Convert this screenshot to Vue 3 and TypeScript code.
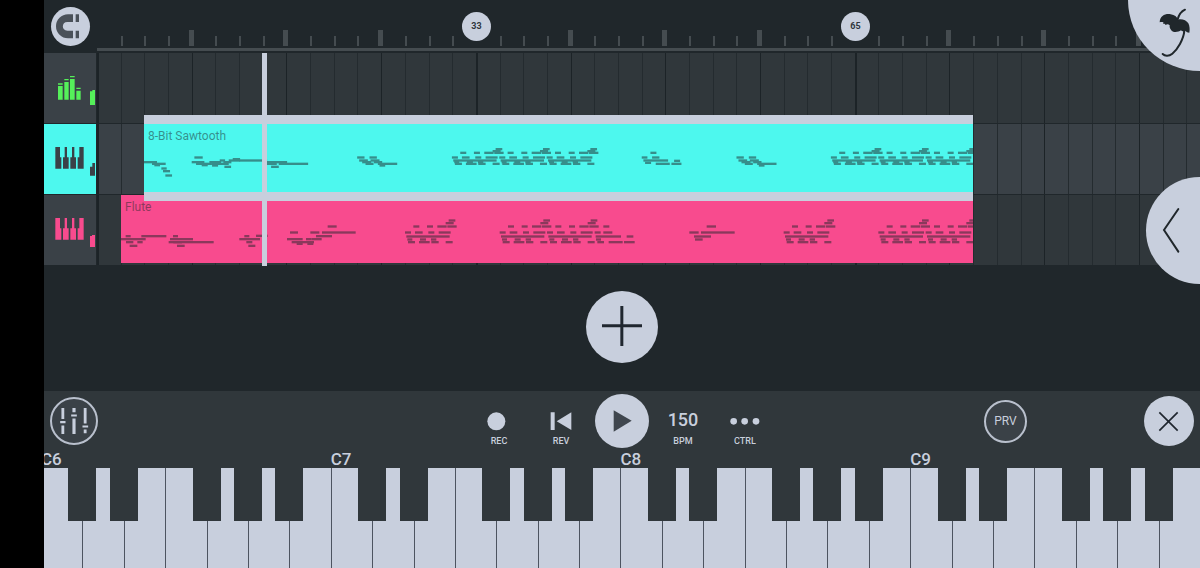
<script setup lang="ts">
import { computed, ref } from 'vue'

type Note = [x: number, row: number, w: number]

interface Clip {
  name: string
  start: number
  length: number
  notes: Note[]
}

interface Track {
  id: string
  label: string
  tone: string
  icon: 'levels' | 'keys'
  clip?: Clip
}

const STEP = 23.68
const UNITS = 71

const x = (step: number): number => Math.round(step * STEP)

/* Note columns are in 1/71 of a step, rows in thirds of a pixel from the top of the clip. */
const riff: [number, number, number][] = [
  [25, 0, 18], [66, 0, 18], [97, 0, 28], [127, 0, 28],
  [122, 1, 24], [131, 2, 20],
  [0, 3, 18], [30, 3, 23], [70, 3, 18], [101, 3, 36],
  [4, 4, 130],
  [7, 5, 15], [45, 5, 18], [78, 5, 16],
  [9, 6, 21], [42, 6, 32], [79, 6, 22], [122, 6, 21],
]

const riffs = (steps: number[], rows: number[]): Note[] =>
  steps.flatMap((s) => riff.map(([nx, r, w]): Note => [s * UNITS + nx, rows[r], w]))

const shift = (notes: Note[], by: number): Note[] => notes.map(([nx, r, w]): Note => [nx + by, r, w])

const fall: Note[] = [
  [0, 100, 22], [37, 100, 22], [6, 109, 26], [15, 114, 27], [25, 119, 24],
  [40, 109, 27], [50, 114, 25], [62, 119, 58], [67, 124, 17],
]

const sawNotes: Note[] = [
  [0, 114, 39], [24, 119, 41], [31, 123, 17], [52, 133, 16], [57, 141, 21], [64, 154, 20],
  [151, 100, 25], [143, 114, 38], [156, 119, 45], [173, 123, 18], [196, 114, 35], [201, 119, 53],
  [204, 124, 18], [227, 109, 16], [238, 114, 24], [241, 128, 20], [254, 109, 34], [266, 105, 22],
  [286, 109, 83], [365, 114, 64], [365, 119, 33], [404, 119, 88], [381, 128, 23],
  ...shift(fall, 639),
  ...riffs([13, 15, 17], [86, 81, 75, 100, 109, 114, 119]),
  [1492, 100, 17], [1523, 100, 22], [1518, 86, 18], [1497, 109, 74], [1502, 116, 18],
  [1534, 119, 42], [1581, 119, 30], [1589, 110, 18],
  ...shift(fall, 1776),
  ...riffs([29, 31, 33], [86, 81, 75, 100, 109, 114, 119]),
]

const fluteNotes: Note[] = [
  [14, 123, 15], [0, 132, 74], [15, 141, 22], [49, 141, 16], [26, 152, 23], [61, 123, 75],
  [156, 123, 15], [147, 132, 69], [143, 141, 40], [157, 141, 121], [168, 152, 23],
  [355, 132, 62], [370, 123, 15], [376, 141, 18], [382, 152, 21], [405, 122, 35],
  [507, 112, 24], [498, 132, 47], [512, 141, 67], [527, 146, 18], [555, 132, 17], [559, 146, 18],
  [568, 112, 27], [572, 132, 30], [585, 123, 48], [603, 112, 101], [620, 94, 27],
  ...riffs([12, 16, 18], [94, 84, 76, 112, 124, 133, 141]),
  [1421, 112, 18], [1447, 112, 27], [1447, 94, 18], [1424, 124, 76], [1517, 124, 20],
  [1425, 133, 15], [1429, 141, 20], [1463, 141, 42], [1509, 141, 32],
  [1757, 94, 28], [1705, 112, 28], [1740, 112, 101], [1719, 124, 51], [1722, 133, 23],
  ...riffs([28, 32, 34], [94, 84, 76, 112, 124, 133, 141]),
]

const tracks: Track[] = [
  { id: 'master', label: 'Master', tone: 'green', icon: 'levels' },
  {
    id: 'sawtooth', label: '8-Bit Sawtooth', tone: 'cyan', icon: 'keys',
    clip: { name: '8-Bit Sawtooth', start: 2, length: 35, notes: sawNotes },
  },
  {
    id: 'flute', label: 'Flute', tone: 'pink', icon: 'keys',
    clip: { name: 'Flute', start: 1, length: 36, notes: fluteNotes },
  },
]

const selected = ref('sawtooth')
const playing = ref(false)
const playhead = 7

const steps = Array.from({ length: 160 }, (_, i) => i)
const ticks = steps.filter((s) => s % 16 !== 0)
const markers = [
  { step: 16, bar: 33 },
  { step: 32, bar: 65 },
]

const lineWidth = (s: number): number => (s % 16 === 0 ? 2 : 1)
const lineClass = (s: number): string => (s % 4 === 0 ? 'line strong' : 'line')

const names = ['C', 'D', 'E', 'F', 'G', 'A', 'B']
const keys = computed(() =>
  [6, 7, 8, 9].flatMap((octave) =>
    names.map((n) => ({
      id: `${n}${octave}`,
      label: n === 'C' ? `C${octave}` : '',
      sharp: n !== 'E' && n !== 'B' ? `${n}♯${octave}` : '',
    })),
  ),
)
</script>

<template>
  <div class="app">
    <main class="studio">
      <section class="timeline">
        <div class="ruler-row">
          <div class="corner">
            <button class="round magnet" type="button" aria-label="Snap to grid">
              <svg viewBox="33 20 117 117" aria-hidden="true">
                <path d="M99 42H84a36 36 0 0 0 0 72h15V91H82c-18 0-18-26 0-26h17z" />
                <path d="M107 42h10v23h-10zM107 91h10v23h-10z" />
              </svg>
            </button>
          </div>
          <div class="ruler">
            <svg class="ticks" aria-hidden="true">
              <rect
                v-for="s in ticks" :key="s" class="tick"
                :x="x(s) - (s % 4 === 0 ? 3 : 0)" :y="s % 4 === 0 ? 30 : 36"
                :width="s % 4 === 0 ? 5 : 2" :height="s % 4 === 0 ? 16 : 10"
              />
            </svg>
            <button
              v-for="m in markers" :key="m.bar" class="marker" type="button"
              :style="{ left: x(m.step) + 'px' }"
            >{{ m.bar }}</button>
          </div>
        </div>

        <div class="lanes">
          <div
            v-for="t in tracks" :key="t.id"
            :class="['lane', t.tone, { selected: selected === t.id }]"
          >
            <button class="head" type="button" :aria-label="t.label" @click="selected = t.id">
              <svg viewBox="0 0 156 213" aria-hidden="true">
                <template v-if="t.icon === 'levels'">
                  <path d="M42 99h14v41H42zM61 87h13v53H61zM78 78h14v62H78zM97 113h13v27H97z" />
                  <path d="M42 91h14v4H42zM61 78h13v4H61zM78 69h14v4H78zM97 104h13v4H97z" />
                  <path d="M138 115h7v-4h8v45h-15z" />
                </template>
                <template v-else>
                  <path d="M34 69h14v31h4v34H34zM62 69h7v31h5v34H57v-34h5zM84 69h7v31h5v34H79v-34h5zM106 69h13v65h-18v-34h5z" />
                  <path v-if="t.tone === 'cyan'" d="M138 128h7v-11h8v38h-15z" />
                  <path v-else d="M138 123h6v-3h9v36h-15z" />
                </template>
              </svg>
            </button>
            <div class="track">
              <svg class="grid" aria-hidden="true">
                <rect
                  v-for="s in steps" :key="s" :class="lineClass(s)"
                  :x="x(s)" y="0" :width="lineWidth(s)" height="100%"
                />
              </svg>
              <div
                v-if="t.clip" class="clip"
                :style="{ left: x(t.clip.start) + 'px', width: x(t.clip.length) + 'px' }"
              >
                <span class="clip-name">{{ t.clip.name }}</span>
                <svg
                  class="notes" :viewBox="`0 0 ${t.clip.length * UNITS} 204`"
                  preserveAspectRatio="none" aria-hidden="true"
                >
                  <rect
                    v-for="(n, i) in t.clip.notes" :key="i"
                    :x="n[0]" :y="n[1] - 3" :width="n[2]" height="7"
                  />
                </svg>
              </div>
            </div>
          </div>
          <div class="cursor-layer">
            <div class="playhead" :style="{ left: x(playhead) - 1 + 'px' }"></div>
          </div>
        </div>
      </section>

      <section class="empty">
        <button class="round add" type="button" aria-label="Add track">
          <svg viewBox="0 0 216 216" aria-hidden="true">
            <path d="M48 100h120v9H48zM103 45h9v120h-9z" />
          </svg>
        </button>
      </section>

      <section class="panel">
        <div class="toolbar">
          <div class="tools-left">
            <button class="ring mixer" type="button" aria-label="Mixer">
              <svg viewBox="35 39 140 140" aria-hidden="true">
                <path d="M65 68h9v35h-9zM65 123h9v27h-9zM61 109h17v7H61zM100 68h10v13h-10zM100 101h10v49h-10zM96 88h18v7H96zM136 68h9v49h-9zM136 136h9v12h-9zM132 123h18v7h-18z" />
              </svg>
            </button>
          </div>

          <div class="transport">
            <button class="item" type="button">
              <svg viewBox="0 0 96 72" aria-hidden="true"><circle cx="40" cy="37" r="27" /></svg>
              <span class="caption">REC</span>
            </button>
            <button class="item" type="button">
              <svg viewBox="0 0 96 72" aria-hidden="true"><path d="M17 10h12v53H17zM79 10v53L35 37z" /></svg>
              <span class="caption">REV</span>
            </button>
            <button
              class="round play" type="button" aria-label="Play"
              :aria-pressed="playing" @click="playing = !playing"
            >
              <svg viewBox="0 0 162 162" aria-hidden="true"><path d="M56 49l54 31-54 33z" /></svg>
            </button>
            <button class="item" type="button">
              <span class="tempo">150</span>
              <span class="caption">BPM</span>
            </button>
            <button class="item" type="button">
              <svg viewBox="0 0 96 72" aria-hidden="true">
                <circle cx="14" cy="37" r="10" /><circle cx="47" cy="37" r="10" /><circle cx="81" cy="37" r="10" />
              </svg>
              <span class="caption">CTRL</span>
            </button>
          </div>

          <div class="tools-right">
            <button class="ring preview" type="button">PRV</button>
            <button class="round close" type="button" aria-label="Close keyboard">
              <svg viewBox="0 0 150 150" aria-hidden="true"><path d="M46 49l55 55M101 49l-55 55" /></svg>
            </button>
          </div>
        </div>

        <div class="keyboard">
          <div v-for="k in keys" :key="k.id" class="key">
            <span class="key-label">{{ k.label }}</span>
            <button class="white" type="button" :aria-label="k.id"></button>
            <button v-if="k.sharp" class="black" type="button" :aria-label="k.sharp"></button>
          </div>
        </div>
      </section>

      <button class="logo" type="button" aria-label="Main menu">
        <svg viewBox="684 0 216 213" aria-hidden="true">
          <path d="M779 67C780 47 797 40 812 43C824 45 831 50 833 59C843 55 860 60 865 70C869 78 870 88 868 98C863 98 859 95 856 92C851 97 846 94 843 91C835 97 820 98 815 92C810 86 808 82 809 76C805 72 801 72 797 75L794 71L790 72L790 67C786 66 783 66 779 67Z" />
          <path class="stroke" d="M833 58C837 43 846 33 855 29" />
          <path class="stroke" d="M853 92C851 118 832 149 817 161C806 170 794 168 788 162" />
        </svg>
      </button>
      <button class="drawer" type="button" aria-label="Open side panel">
        <svg viewBox="738 201 162 321" aria-hidden="true"><path d="M835 297L792 360L835 425" /></svg>
      </button>
    </main>
  </div>
</template>

<style>
body {
  margin: 0;
  background: #000;
}
</style>

<style scoped>
.app {
  --light: #c8cfdd;
  --dark: #20272b;
  --surface: #30373b;
  --raised: #3a4147;
  box-sizing: border-box;
  min-height: 100vh;
  padding-left: 44px;
  display: flex;
  background: #000;
  color: var(--light);
  font-family: Roboto, "Liberation Sans", sans-serif;
}

button {
  margin: 0;
  padding: 0;
  border: 0;
  background: none;
  color: inherit;
  font: inherit;
  cursor: pointer;
}

svg {
  display: block;
}

.studio {
  position: relative;
  flex: 1;
  min-width: 0;
  display: flex;
  flex-direction: column;
  overflow: hidden;
  background: var(--dark);
}

.round {
  flex: none;
  border-radius: 50%;
  background: var(--light);
}

.round svg {
  width: 100%;
  height: 100%;
}

.ring {
  flex: none;
  box-sizing: border-box;
  border: 2px solid #b9c0cd;
  border-radius: 50%;
  background: var(--raised);
}

.ruler-row {
  display: flex;
  height: 53px;
}

.corner {
  flex: none;
  width: 53px;
  display: flex;
  align-items: center;
  justify-content: center;
}

.magnet {
  width: 39px;
  height: 39px;
}

.magnet path {
  fill: #4a5159;
}

.ruler {
  position: relative;
  flex: 1;
  box-sizing: border-box;
  height: 51px;
  border-bottom: 3px solid #454c50;
  overflow: hidden;
}

.ticks {
  width: 100%;
  height: 48px;
}

.tick {
  fill: #454c50;
}

.marker {
  position: absolute;
  top: 12px;
  width: 29px;
  height: 29px;
  margin-left: -14px;
  border-radius: 50%;
  background: var(--light);
  color: #30373d;
  font-size: 9px;
  font-weight: 700;
  line-height: 29px;
}

.lanes {
  position: relative;
}

.lane {
  position: relative;
  display: flex;
  height: 71px;
  color: #55f05a;
}

.lane.cyan {
  color: #4df8ee;
}

.lane.pink {
  color: #f84b8e;
}

.lane.selected {
  z-index: 1;
}

.head {
  flex: none;
  width: 52px;
  height: 70px;
  margin-right: 1px;
  background: var(--raised);
}

.head svg {
  width: 52px;
  height: 71px;
  fill: currentColor;
}

.selected .head {
  background: currentColor;
}

.selected .head svg {
  fill: #3a4147;
}

.track {
  position: relative;
  flex: 1;
  min-width: 0;
  height: 70px;
  background: var(--surface);
}

.selected .track {
  background: var(--raised);
}

.grid {
  width: 100%;
  height: 70px;
}

.line {
  fill: #242b2f;
}

.line.strong {
  fill: #1c2327;
}

.clip {
  position: absolute;
  top: 0;
  height: 68px;
  background: currentColor;
}

.selected .clip {
  top: -9px;
  border-top: 9px solid var(--light);
  border-bottom: 9px solid var(--light);
}

.clip-name {
  position: absolute;
  top: 4px;
  left: 4px;
  color: rgba(32, 39, 43, 0.5);
  font-size: 12px;
  line-height: 16px;
  white-space: nowrap;
}

.notes {
  width: 100%;
  height: 68px;
  overflow: hidden;
  fill: #20272b;
  opacity: 0.5;
}

.cursor-layer {
  position: absolute;
  z-index: 2;
  top: 0;
  bottom: 0;
  left: 53px;
  right: 0;
  pointer-events: none;
}

.playhead {
  position: absolute;
  top: 0;
  bottom: 0;
  width: 5px;
  background: var(--light);
}

.empty {
  flex: 1;
  min-height: 96px;
  padding-bottom: 3px;
  display: flex;
  align-items: center;
  justify-content: center;
}

.add {
  width: 72px;
  height: 72px;
}

.add path {
  fill: #20272f;
}

.panel {
  background: var(--surface);
}

.toolbar {
  display: grid;
  grid-template-columns: 1fr auto 1fr;
  height: 60px;
}

.tools-left,
.tools-right {
  display: flex;
  align-items: center;
  padding: 0 6px;
}

.tools-right {
  justify-content: flex-end;
  gap: 117px;
}

.mixer {
  width: 48px;
  height: 48px;
}

.mixer svg {
  width: 44px;
  height: 44px;
  fill: var(--light);
}

.transport {
  display: grid;
  grid-template-columns: 62px 62px 60px 62px 62px;
  justify-items: center;
  align-items: center;
}

.item {
  display: flex;
  flex-direction: column;
  align-items: center;
  box-sizing: border-box;
  width: 62px;
  height: 60px;
  padding-top: 18px;
}

.item svg {
  width: 32px;
  height: 24px;
  fill: var(--light);
}

.caption {
  margin-top: 2px;
  font-size: 9px;
  font-weight: 500;
  line-height: 12px;
}

.tempo {
  height: 24px;
  font-size: 18px;
  font-weight: 500;
  line-height: 22px;
}

.play {
  width: 54px;
  height: 54px;
}

.play path {
  fill: #3f464e;
}

.preview {
  width: 43px;
  height: 43px;
  font-size: 12px;
}

.close {
  width: 50px;
  height: 50px;
}

.close path {
  fill: none;
  stroke: #20272f;
  stroke-width: 5;
}

.keyboard {
  display: flex;
  margin-left: -3px;
}

.key {
  position: relative;
  flex: 1;
  min-width: 0;
}

.key-label {
  display: block;
  height: 17px;
  font-size: 17px;
  font-weight: 500;
  line-height: 17px;
}

.white {
  display: block;
  box-sizing: border-box;
  width: 100%;
  height: 100px;
  border-left: 1px solid #4d5460;
  background: var(--light);
}

.black {
  position: absolute;
  z-index: 1;
  top: 17px;
  right: -14px;
  width: 28px;
  height: 53px;
  background: var(--surface);
}

.logo {
  position: absolute;
  z-index: 3;
  top: 0;
  right: 0;
  width: 72px;
  height: 71px;
  border-bottom-left-radius: 100%;
  background: var(--light);
}

.logo svg {
  width: 72px;
  height: 71px;
  fill: #20272b;
}

.logo .stroke {
  fill: none;
  stroke: #20272b;
  stroke-width: 6;
  stroke-linecap: round;
}

.drawer {
  position: absolute;
  z-index: 3;
  top: 177px;
  right: 0;
  width: 54px;
  height: 107px;
  border-radius: 54px 0 0 54px;
  background: var(--light);
}

.drawer svg {
  width: 54px;
  height: 107px;
  fill: none;
  stroke: #20272b;
  stroke-width: 6;
  stroke-linecap: round;
}
</style>
